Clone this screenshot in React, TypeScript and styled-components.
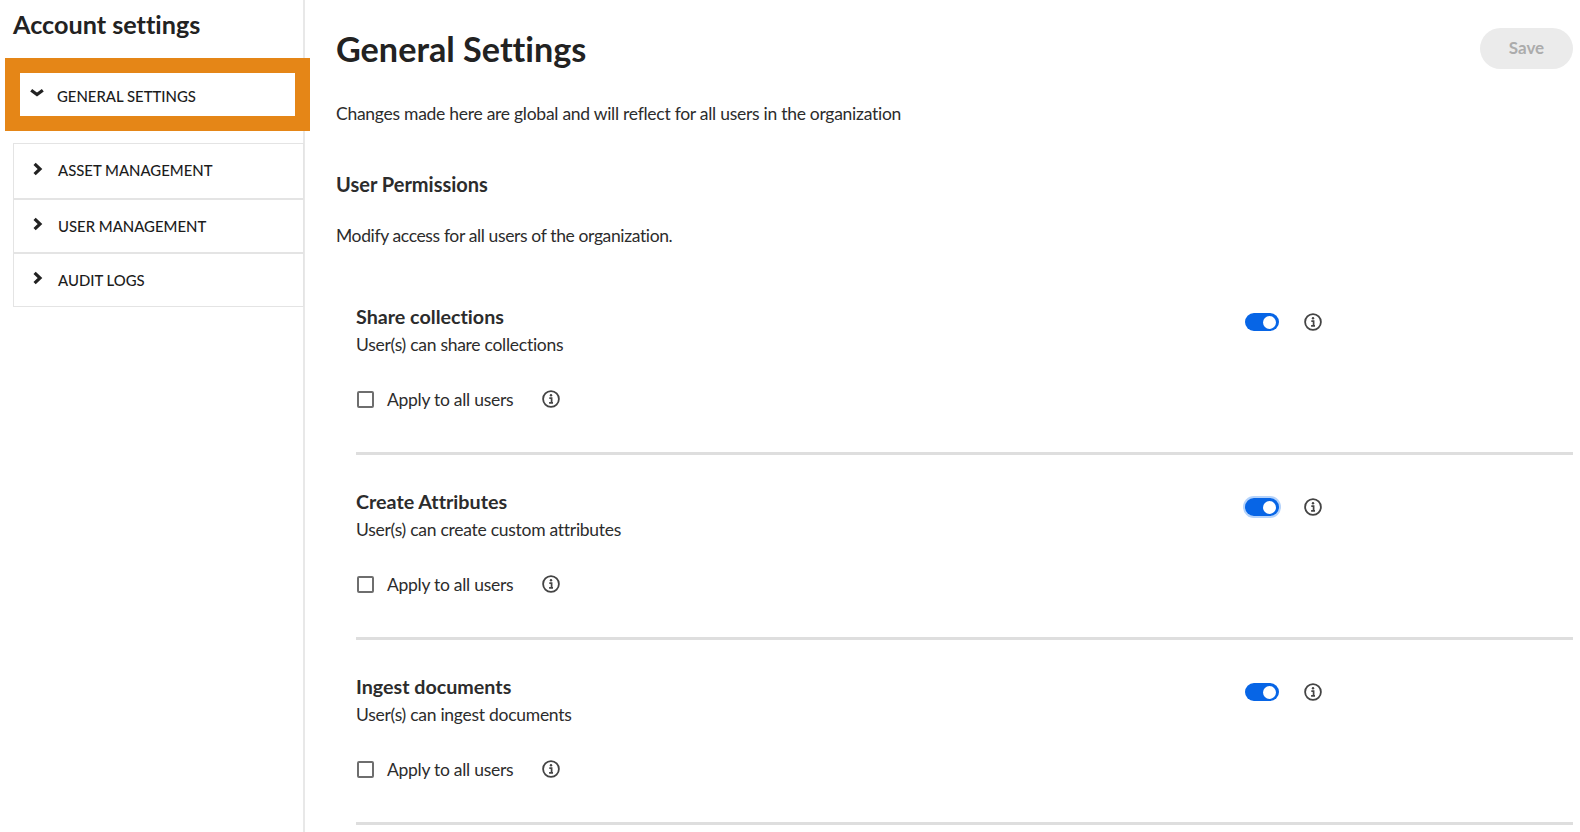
import React from "react";
import styled, { createGlobalStyle } from "styled-components";

const Global = createGlobalStyle`
  html, body { margin: 0; padding: 0; background: #fff; }
  body { font-family: "Lato", "Noto Sans", sans-serif; color: #2c2c2c; overflow: hidden; font-variant-ligatures: none; }
`;
const Page = styled.div`display: flex; width: 1580px; height: 832px; overflow: hidden; background: #fff;`;
const Sidebar = styled.aside`
  width: 305px; flex: none; box-sizing: border-box; padding: 0 0 0 13px;
  border-right: 2px solid #e8e8e8; height: 832px;
`;
const SideTitle = styled.h2`
  margin: 0; height: 58px; box-sizing: border-box; padding-top: 7px;
  font-size: 25.2px; line-height: 34px; font-weight: 700; color: #222;
`;
const Highlight = styled.div`
  box-sizing: border-box; width: 305px; height: 73px; margin-left: -8px; margin-bottom: 12px;
  border: 15px solid #e58617; background: #fff; display: flex; align-items: center;
  padding-left: 10px; position: relative;
`;
const NavList = styled.div`width: 291px; box-sizing: border-box; border: 1px solid #e4e4e4;`;
const NavRow = styled.div`
  height: 54px; display: flex; align-items: center; padding-left: 17px; box-sizing: border-box;
  & + & { border-top: 2px solid #e4e4e4; }
`;
const NavIcon = styled.svg`width: 14px; height: 14px; flex: none; margin-right: 13px; margin-top: -4px;`;
const NavLabel = styled.span<{ $shift: number }>`
  font-size: 14.9px; font-weight: 500; color: #1c1c1c; margin-top: ${p => p.$shift}px;
`;

const Main = styled.main`flex: 1; min-width: 0; padding: 0 7px 0 31px;`;
const Header = styled.div`display: flex; justify-content: space-between; align-items: flex-start; height: 98px;`;
const Title = styled.h1`margin: 27px 0 0; font-size: 34.2px; line-height: 44px; font-weight: 700; color: #222;`;
const SaveButton = styled.button`
  margin-top: 28px; width: 93px; height: 41px; border: 0; border-radius: 21px; background: #ebebeb;
  color: #acacac; font: 700 17px "Lato", sans-serif; padding: 0 0 3px;
`;
const BodyText = styled.p`margin: 0; font-size: 17.5px; letter-spacing: -0.27px; line-height: 30px; color: #2c2c2c; box-sizing: border-box;`;
const Intro = styled(BodyText)`height: 56px; padding-top: 1px;`;
const SectionTitle = styled.h3`margin: 0; font-size: 20px; line-height: 30px; font-weight: 700; height: 67px; color: #2c2c2c; padding-top: 15px; box-sizing: border-box;`;
const SectionText = styled(BodyText)`height: 49px; letter-spacing: -0.37px;`;
const Perm = styled.section`
  margin-left: 20px; height: 185px; box-sizing: border-box; padding-top: 32px; border-bottom: 3px solid #dedede;
`;
const PermTop = styled.div`display: flex; align-items: flex-start;`;
const PermText = styled.div`width: 889px;`;
const PermName = styled.div`font-size: 19.7px; line-height: 30px; font-weight: 700; color: #2c2c2c;`;
const PermDesc = styled.div`font-size: 17.5px; letter-spacing: -0.27px; line-height: 26px; color: #2c2c2c;`;
const Toggle = styled.div<{ $focus?: boolean }>`
  width: 34px; height: 18px; margin-top: 11px; border-radius: 9px; background: #0765e6; position: relative;
  box-shadow: ${p => (p.$focus ? "0 0 0 2px #b5d3fb" : "none")};
  &::after { content: ""; position: absolute; right: 3px; top: 2.5px; width: 13px; height: 13px; border-radius: 50%; background: #fff; }
`;
const InfoGap = styled.div`margin-left: 25px; margin-top: 11px; display: flex;`;
const CheckRow = styled.label`display: flex; align-items: center; margin-top: 26px; height: 30px;`;
const Box = styled.span`width: 13px; height: 13px; margin: 1px 0 0 1px; border: 2.5px solid #6e6e6e; border-radius: 2px; background: #fff; flex: none;`;
const CheckLabel = styled.span`margin-left: 13px; width: 155px; font-size: 17.5px; letter-spacing: -0.27px; color: #2c2c2c;`;

const Info = () => (
  <svg width="18" height="18" viewBox="0 0 18 18" fill="none">
    <circle cx="9" cy="9" r="7.9" stroke="#444" strokeWidth="1.8" />
    <circle cx="9" cy="5.3" r="1.2" fill="#444" />
    <path d="M7.3 8.1h2.3v4.5M7.1 12.8h3.9" stroke="#444" strokeWidth="1.7" />
  </svg>
);
const ChevronRight = () => (
  <NavIcon viewBox="0 0 14 14"><path d="M3.6 1.8 9 7 3.6 12.2" fill="none" stroke="#222" strokeWidth="3.2" /></NavIcon>
);
const ChevronDown = () => (
  <NavIcon viewBox="0 0 14 14"><path d="M1.2 4.2 7 8.6 12.8 4.2" fill="none" stroke="#222" strokeWidth="3.2" /></NavIcon>
);

const perms = [
  { name: "Share collections", desc: "User(s) can share collections" },
  { name: "Create Attributes", desc: "User(s) can create custom attributes", focus: true },
  { name: "Ingest documents", desc: "User(s) can ingest documents" },
];
const navItems = [
  { label: "ASSET MANAGEMENT", shift: -2 },
  { label: "USER MANAGEMENT", shift: -1 },
  { label: "AUDIT LOGS", shift: -1 },
];

export default function App() {
  return (
    <Page>
      <Global />
      <Sidebar>
        <SideTitle>Account settings</SideTitle>
        <Highlight>
          <ChevronDown />
          <NavLabel $shift={2}>GENERAL SETTINGS</NavLabel>
        </Highlight>
        <NavList>
          {navItems.map(n => (
            <NavRow key={n.label}><ChevronRight /><NavLabel $shift={n.shift}>{n.label}</NavLabel></NavRow>
          ))}
        </NavList>
      </Sidebar>
      <Main>
        <Header>
          <Title>General Settings</Title>
          <SaveButton>Save</SaveButton>
        </Header>
        <Intro>Changes made here are global and will reflect for all users in the organization</Intro>
        <SectionTitle>User Permissions</SectionTitle>
        <SectionText>Modify access for all users of the organization.</SectionText>
        {perms.map(p => (
          <Perm key={p.name}>
            <PermTop>
              <PermText>
                <PermName>{p.name}</PermName>
                <PermDesc>{p.desc}</PermDesc>
              </PermText>
              <Toggle $focus={p.focus} />
              <InfoGap><Info /></InfoGap>
            </PermTop>
            <CheckRow>
              <Box />
              <CheckLabel>Apply to all users</CheckLabel>
              <Info />
            </CheckRow>
          </Perm>
        ))}
      </Main>
    </Page>
  );
}
